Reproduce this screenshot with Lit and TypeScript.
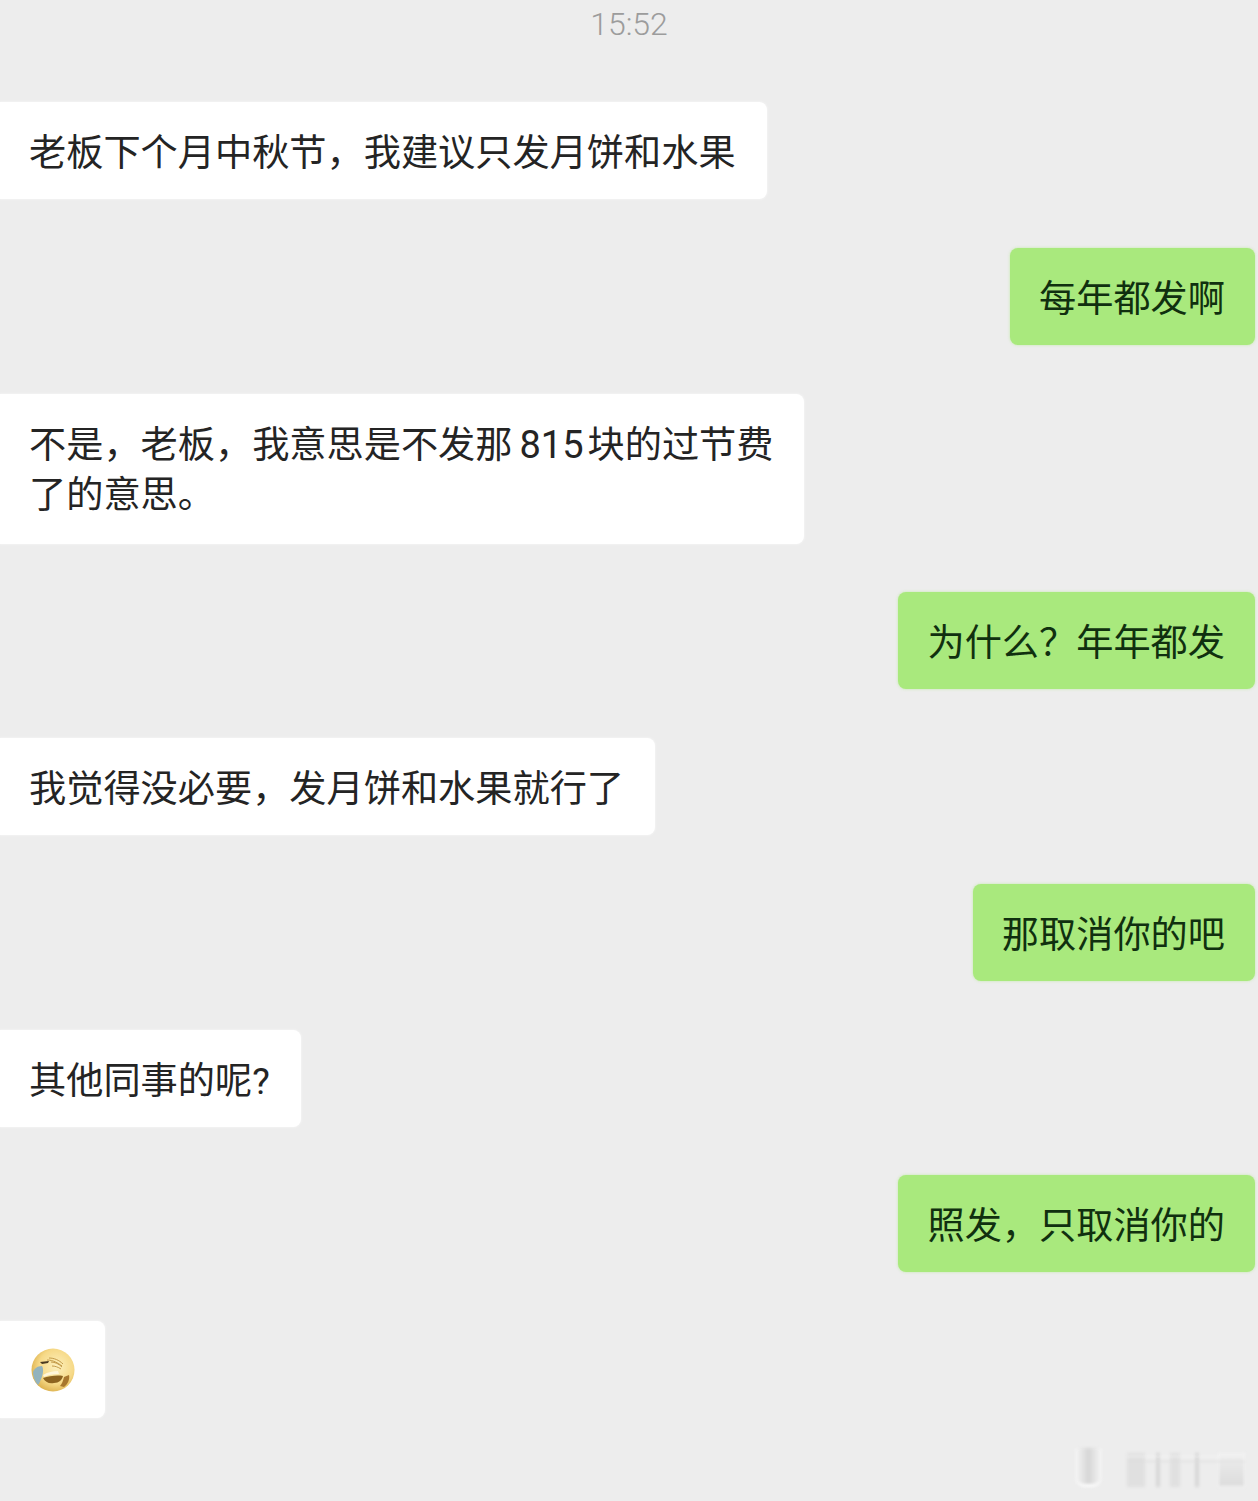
import { LitElement, css, html } from 'lit';
import { customElement } from 'lit/decorators.js';

interface Msg {
  from: 'them' | 'me';
  lines?: string[];
  emoji?: boolean;
}

const MESSAGES: Msg[] = [
  { from: 'them', lines: ['老板下个月中秋节，我建议只发月饼和水果'] },
  { from: 'me', lines: ['每年都发啊'] },
  { from: 'them', lines: ['不是，老板，我意思是不发那815块的过节费', '了的意思。'] },
  { from: 'me', lines: ['为什么？年年都发'] },
  { from: 'them', lines: ['我觉得没必要，发月饼和水果就行了'] },
  { from: 'me', lines: ['那取消你的吧'] },
  { from: 'them', lines: ['其他同事的呢?'] },
  { from: 'me', lines: ['照发，只取消你的'] },
  { from: 'them', emoji: true },
];

const emoji = html`
  <svg class="emoji" viewBox="0 0 44 44" aria-hidden="true">
    <defs>
      <radialGradient id="face" cx="58%" cy="42%" r="62%">
        <stop offset="0" stop-color="#fdf0bd" />
        <stop offset="0.65" stop-color="#f6d987" />
        <stop offset="1" stop-color="#dcb04c" />
      </radialGradient>
    </defs>
    <circle cx="22" cy="22" r="21.5" fill="url(#face)" />
    <path d="M2 24c1-3 4-6 9-6 2 3 1 9-1 13-1 3-2 5-3 6C4 34 2 29 2 24z" fill="#93b3bd" />
    <path d="M9 14l9-1-1 2-6 1z" fill="#4a3a20" />
    <path d="M12 30c6-2 14-3 20-2-1 4-4 7-9 7-5 1-9-1-11-5z" fill="#8d6420" />
    <path d="M12 27c5-3 10-4 15-4l1 3c-6 0-11 1-15 3z" fill="#fff6da" />
    <path d="M18 10c5 0 10 2 14 6M20 14c4 0 8 2 11 5M16 12c6 0 11 3 15 6M21 18c3 0 6 1 9 3" stroke="#c39a48" stroke-width="1" fill="none" />
    <path d="M29 38c2-2 3-5 4-9l5-2c1 4-1 9-5 12z" fill="#a8772e" />
  </svg>
`;

// digits and the ascii question mark sit in their own spans, they use a latin face
function renderLine(line: string) {
  return line.split(/(\d+|\?)/).map((part) => {
    if (/^\d+$/.test(part)) return html`<span class="num">${part}</span>`;
    if (part === '?') return html`<span class="ask">${part}</span>`;
    return part;
  });
}

@customElement('app-root')
export class AppRoot extends LitElement {
  render() {
    return html`
      <main class="page">
        <div class="time">15:52</div>
        <div class="list">
          ${MESSAGES.map(
            (m) => html`
              <div class="row ${m.from}">
                <div class="bubble ${m.emoji ? 'has-emoji' : ''} ${(m.lines?.length ?? 0) > 1 ? 'multi' : ''}">
                  ${m.emoji ? emoji : m.lines?.map((line) => html`<div class="line">${renderLine(line)}</div>`)}
                </div>
              </div>
            `
          )}
        </div>
        <div class="mark" aria-hidden="true">
          <i class="cup"></i>
          <i class="wide"></i>
          <i class="bar a"></i>
          <i class="bar b"></i>
          <i class="bar c"></i>
          <i class="box"></i>
        </div>
      </main>
    `;
  }

  static styles = css`
    :host {
      display: block;
    }

    .page {
      position: relative;
      box-sizing: border-box;
      height: 1501px;
      overflow: hidden;
      background: #ededed;
      font-family: 'Liberation Sans', 'Noto Sans CJK SC', sans-serif;
    }

    .time {
      height: 102px;
      padding-top: 5px;
      box-sizing: border-box;
      text-align: center;
      font-family: Roboto, sans-serif;
      font-weight: 300;
      font-size: 32px;
      line-height: 38px;
      color: #9c9c9c;
    }

    .list {
      display: flex;
      flex-direction: column;
      gap: 48.75px;
    }

    .row {
      display: flex;
    }

    .row.me {
      justify-content: flex-end;
      padding-right: 3px;
    }

    .bubble {
      box-sizing: border-box;
      padding: 26px 31px 21px 29px;
      font-size: 37.2px;
      line-height: 50px;
      white-space: nowrap;
      color: #242424;
      background: #ffffff;
      box-shadow: 0 0 3px rgba(255, 255, 255, 0.7);
    }

    .bubble.multi {
      padding-bottom: 24px;
    }

    .them .bubble {
      border-radius: 0 8px 8px 0;
    }

    .me .bubble {
      padding-right: 30px;
      border-radius: 8px;
      background: #a9e97d;
      color: #10300f;
      box-shadow: 0 0 3px rgba(169, 233, 125, 0.6);
    }

    .num {
      padding: 0 4px 0 7px;
      font-family: Roboto, sans-serif;
      font-size: 38px;
      line-height: 0;
    }

    .ask {
      font-family: Roboto, sans-serif;
      line-height: 0;
    }

    .bubble.has-emoji {
      display: flex;
      align-items: center;
      width: 105px;
      height: 97px;
      padding: 0 0 0 31px;
    }

    .emoji {
      width: 44px;
      height: 44px;
      filter: blur(0.6px);
    }

    /* washed out watermark in the bottom right corner */
    .mark {
      position: absolute;
      right: 13px;
      bottom: 14px;
      display: flex;
      align-items: flex-end;
      height: 39px;
      filter: blur(1.5px);
    }

    .mark::after {
      content: '';
      position: absolute;
      left: 52px;
      right: 0;
      top: 8px;
      height: 4px;
      border-top: 1px solid #f6f6f6;
      border-bottom: 1px solid #dcdcdc;
    }

    .mark i {
      display: block;
    }

    .mark .cup {
      box-sizing: border-box;
      width: 27px;
      height: 39px;
      border-radius: 2px 2px 10px 10px;
      background: linear-gradient(to right, #f6f6f6, #d6d6d6 50%, #f6f6f6);
      border-bottom: 3px solid #fbfbfb;
    }

    .mark .wide {
      width: 18px;
      height: 34px;
      margin-left: 25px;
      background: #e0e0e0;
    }

    .mark .bar {
      height: 34px;
      background: #e0e0e0;
    }

    .mark .bar.a {
      width: 4px;
      margin-left: 11px;
      background: #d8d8d8;
    }

    .mark .bar.b {
      width: 10px;
      margin-left: 10px;
    }

    .mark .bar.c {
      width: 4px;
      margin-left: 15px;
      background: #d8d8d8;
    }

    .mark .box {
      width: 27px;
      height: 34px;
      margin-left: 19px;
      background: linear-gradient(to bottom, #ededed, #dcdcdc);
      border: 1px solid #f6f6f6;
      box-sizing: border-box;
    }
  `;
}

declare global {
  interface HTMLElementTagNameMap {
    'app-root': AppRoot;
  }
}
